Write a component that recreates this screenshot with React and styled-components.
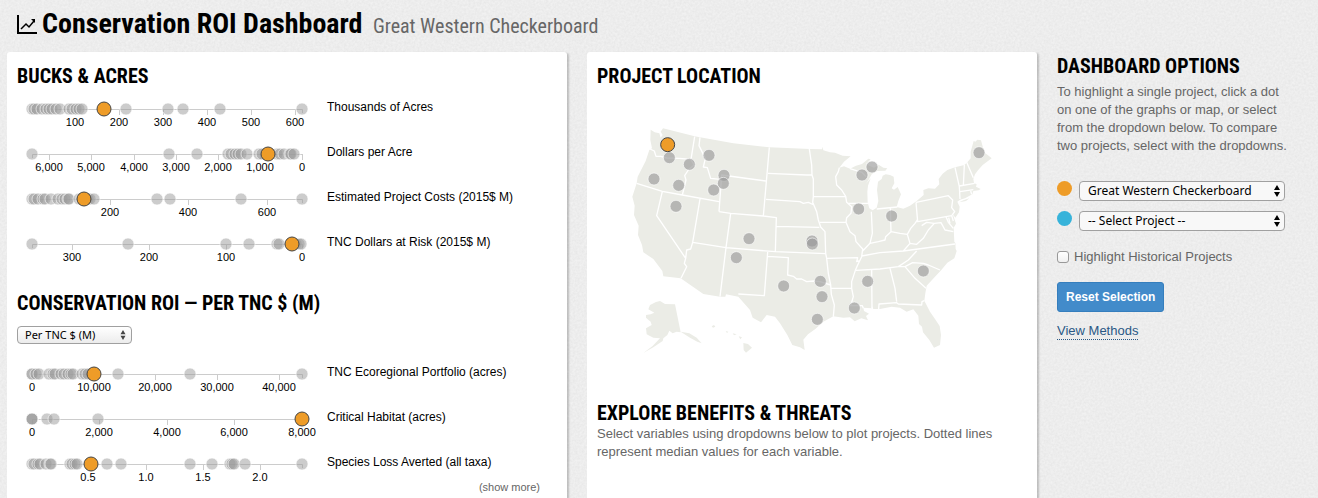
import React from "react";
import styled, { createGlobalStyle } from "styled-components";

const grain = `url("data:image/svg+xml,${encodeURIComponent(
  `<svg xmlns="http://www.w3.org/2000/svg" width="200" height="200"><filter id="g" color-interpolation-filters="sRGB"><feTurbulence type="fractalNoise" baseFrequency="0.45" numOctaves="2" stitchTiles="stitch"/><feColorMatrix values="0.06 0 0 0 0.898  0.06 0 0 0 0.898  0.06 0 0 0 0.898  0 0 0 0 1"/></filter><rect width="200" height="200" filter="url(#g)"/></svg>`
)}")`;

const GlobalStyle = createGlobalStyle`
  *, *::before, *::after { box-sizing: border-box; }
  body {
    margin: 0;
    color: #000;
    background: #ededed ${grain};
    font-family: "Liberation Sans", Arial, sans-serif;
  }
  h1, h2, p { margin: 0; }
`;

const narrow = `"Roboto Condensed", Roboto, sans-serif`;

const Page = styled.div`
  display: flex;
  flex-direction: column;
  min-height: 100vh;
  padding: 0 21px 0 7px;
`;

const Header = styled.header`
  display: flex;
  align-items: center;
  height: 52px;
  padding: 0 10px 2px;
`;

const HeaderIcon = styled.svg`
  flex: none;
  width: 20px;
  height: 20px;
  margin-right: 5px;
`;

const Title = styled.h1`
  font: 700 28px/36px ${narrow};
  white-space: nowrap;

  small {
    margin-left: 4px;
    color: #666;
    font-size: 20px;
    font-weight: 400;
  }
`;

const Columns = styled.main`
  display: grid;
  flex: 1;
  grid-template-columns: minmax(0, 56fr) minmax(0, 45fr) minmax(0, 24fr);
  gap: 20px;
`;

const Card = styled.section`
  padding: 12px 10px 0;
  background: #fff;
  border-radius: 3px 3px 0 0;
  box-shadow: 2px 1px 2px rgba(0, 0, 0, 0.2);
`;

const Sidebar = styled.aside`
  padding-top: 2px;
`;

const Heading = styled.h2`
  margin-top: ${(p) => p.$space || 0}px;
  font: 700 20px/24px ${narrow};
  text-transform: uppercase;
`;

const Copy = styled.p`
  color: #666;
  font-size: 13px;
  line-height: 18px;
`;

const SidebarCopy = styled(Copy)`
  margin-top: 5px;
  padding-right: 4px;
`;

const Charts = styled.div`
  margin-top: ${(p) => p.$space}px;
`;

const ChartRow = styled.div`
  display: flex;
  gap: 10px;
  height: 45px;
`;

const Strip = styled.svg`
  flex: none;
  width: 300px;
  height: 45px;
  overflow: visible;

  path { fill: none; stroke: #ccc; }
  text { font-size: 11px; text-anchor: middle; }
`;

const Dot = styled.circle`
  fill: #999;
  fill-opacity: ${(p) => p.$strength || 0.5};
  stroke: #fff;
  stroke-opacity: 0.6;
`;

const ActiveDot = styled.circle`
  fill: #ee9c28;
  stroke: #444;
`;

const ChartLabel = styled.span`
  padding-top: 3px;
  font-size: 12px;
  line-height: 18px;
`;

const ShowMore = styled.a`
  display: block;
  width: fit-content;
  margin: -16px 17px 0 auto;
  color: #666;
  font-size: 11px;
  line-height: 16px;
  text-decoration: none;
`;

const UsMap = styled.svg`
  display: block;
  width: 100%;
  margin-top: 27px;
`;

const SelectBox = styled.div`
  position: relative;
  width: ${(p) => (p.$compact ? "115px" : "206px")};
  margin-top: ${(p) => (p.$compact ? 11 : 0)}px;

  svg {
    position: absolute;
    top: 4px;
    right: ${(p) => (p.$compact ? 5 : 4)}px;
    width: 8px;
    height: ${(p) => (p.$compact ? 10 : 12)}px;
    fill: ${(p) => (p.$compact ? "#444" : "#000")};
    pointer-events: none;
  }
`;

const Select = styled.select`
  display: block;
  width: 100%;
  height: ${(p) => (p.$compact ? 18 : 20)}px;
  padding: 0 16px 0 ${(p) => (p.$compact ? 7 : 8)}px;
  border: 1px solid #a0a0a0;
  border-radius: 4px;
  background: ${(p) => (p.$compact ? "linear-gradient(#fff, #ececec)" : "#f8f8f8")};
  color: #000;
  font: ${(p) => (p.$compact ? 11 : 12)}px/16px "Noto Sans", "Open Sans", sans-serif;
  appearance: none;
`;

const Pickers = styled.div`
  display: grid;
  gap: 10px;
  margin-top: 26px;
`;

const Picker = styled.label`
  display: flex;
  gap: 7px;
  align-items: flex-start;
`;

const Swatch = styled.span`
  width: 15px;
  height: 15px;
  border-radius: 50%;
  background: ${(p) => p.$color};
`;

const CheckLabel = styled.label`
  display: flex;
  align-items: center;
  gap: 5px;
  margin-top: 17px;
  color: #666;
  font-size: 13px;
  line-height: 18px;
`;

const Checkbox = styled.input`
  width: 12px;
  height: 12px;
  margin: 0;
  border: 1px solid #999;
  border-radius: 3px;
  background: linear-gradient(#fff, #f0f0f0);
  appearance: none;

  &:checked { background: #428bca; }
`;

const ResetButton = styled.button`
  display: block;
  height: 30px;
  margin-top: 16px;
  padding: 0 8px;
  border: 1px solid #357ebd;
  border-radius: 3px;
  background: #428bca;
  color: #fff;
  font: 700 12px/18px "Liberation Sans", Arial, sans-serif;
  white-space: nowrap;
`;

const MethodsLink = styled.a`
  display: inline-block;
  margin-top: 10px;
  border-bottom: 1px dotted #2a5885;
  color: #2a5885;
  font-size: 13px;
  line-height: 17px;
  text-decoration: none;
`;

const bucks = [
  {
    label: "Thousands of Acres",
    ticks: [[58, "100"], [102, "200"], [146, "300"], [190, "400"], [234, "500"], [278, "600"]],
    dots: [15, 17, 20, 25, 29, 32, 35, 39, 43, 52, 55, 59, 62, 65, 109, 151, 166, 203, 285],
    active: 87,
  },
  {
    label: "Dollars per Acre",
    ticks: [[32, "6,000"], [74, "5,000"], [117, "4,000"], [159, "3,000"], [201, "2,000"], [243, "1,000"], [285, "0"]],
    dots: [15, 152, 180, 211, 214, 218, 221, 224, 230, 242, 245, 260, 263, 267, 273, 274, 277],
    active: 251,
  },
  {
    label: "Estimated Project Costs (2015$ M)",
    ticks: [[93, "200"], [171, "400"], [250, "600"]],
    dots: [15, 17, 21, 26, 28, 34, 41, 45, 48, 51, 52, 62, 65, 71, 73, 77, 140, 153, 224, 285],
    active: 67,
  },
  {
    label: "TNC Dollars at Risk (2015$ M)",
    ticks: [[55, "300"], [132, "200"], [209, "100"], [285, "0"]],
    dots: [15, 111, 209, 232, 260, 262, 277, 279, 282, 284],
    active: 275,
  },
];

const returns = [
  {
    label: "TNC Ecoregional Portfolio (acres)",
    ticks: [[15, "0"], [77, "10,000"], [138, "20,000"], [200, "30,000"], [262, "40,000"]],
    dots: [15, 15, 19, 22, 32, 36, 38, 44, 47, 51, 54, 56, 65, 68, 71, 101, 173, 285],
    active: 77,
  },
  {
    label: "Critical Habitat (acres)",
    ticks: [[15, "0"], [82, "2,000"], [150, "4,000"], [217, "6,000"], [285, "8,000"]],
    dots: [15, 15, 15, 30, 37, 81],
    active: 285,
  },
  {
    label: "Species Loss Averted (all taxa)",
    ticks: [[71, "0.5"], [129, "1.0"], [186, "1.5"], [243, "2.0"]],
    dots: [15, 17, 21, 23, 29, 33, 34, 53, 55, 58, 60, 90, 104, 173, 195, 213, 215, 217, 228, 285],
    active: 74,
  },
];

const usOutline =
  "M92 44L104 52L118 55L122 68L128 60L122 50L129 40L224 64L240 67L340 85L448 97L570 102L606 103L607 95L610 106L630 112L645 113L668 122L692 124L672 140L658 158L672 154L690 161L708 152L726 147L745 131L752 133L738 148L762 158L776 149L790 158L802 160L796 167L770 168L755 178L746 194L738 206L752 190L744 212L742 230L743 262L748 280L758 286L770 278L775 258L771 225L774 200L785 192L788 182L797 178L810 180L821 185L823 205L815 220L822 224L833 216L843 238L835 258L830 276L850 281L870 272L890 258L911 240L910 225L925 220L945 221L958 208L956 192L968 176L982 165L1005 157L1033 150L1042 142L1052 130L1052 110L1061 78L1066 80L1072 74L1083 76L1089 98L1095 114L1106 122L1115 130L1104 138L1097 143L1088 150L1074 166L1065 178L1060 192L1062 204L1070 208L1068 215L1082 222L1076 226L1060 228L1057 238L1035 250L1020 254L1012 260L1019 275L1017 292L1006 308L998 296L1008 326L1001 338L1003 380L1006 384L1007 402L1010 408L1003 430L982 443L964 465L945 485L920 512L916 535L913 557L930 590L945 612L959 633L963 660L960 690L942 698L928 675L909 652L906 635L897 627L895 602L880 583L860 590L840 578L815 575L780 582L760 582L756 573L755 580L730 578L732 588L747 596L738 603L744 616L724 610L704 619L690 607L670 608L640 604L610 620L586 642L564 658L550 674L554 705L540 697L517 690L502 660L480 625L465 605L440 600L423 622L398 608L390 585L355 545L318 538L316 545L300 545L250 537L182 490L130 484L127 468L100 432L70 412L66 390L54 360L56 332L42 300L44 272L37 245L50 205L53 185L77 138L88 105L96 100L91 75Z";

const smallLand = [
  "M85 583L90 570L108 561L120 558L135 567L165 568L182 652L170 650L158 655L148 647L142 660L130 670L128 678L100 697L70 714L98 693L120 670L100 668L80 658L78 640L95 630L92 620L78 608L78 600L92 598L103 593Z",
  "M182 650L208 655L230 668L245 685L232 680L210 668Z",
  "M1018 262L1030 256L1048 250L1038 258Z",
  "M275 634L282 630L286 635L279 638Z",
  "M317 648L325 650L321 654Z",
  "M338 655L350 658L342 661Z",
  "M356 664L366 667L361 673Z",
  "M370 684L384 687L396 698L378 713L371 705Z",
];

const stateLines = [
  "M90 102L103 108L108 124L122 124L140 129L178 130L213 133",
  "M224 65L213 133L222 150L205 165L194 182L198 195L187 240",
  "M50 205L127 229L187 240L297 260",
  "M240 67L237 92L256 130L250 156L262 158L272 190L301 193",
  "M297 290L305 180L437 198",
  "M448 97L430 303",
  "M444 175L560 180L577 180",
  "M438 253L540 260L550 265L565 262L582 270",
  "M568 102L575 150L576 180L580 192L580 245L677 244",
  "M297 290L332 295L430 303L469 308L466 410",
  "M469 334L598 337",
  "M580 245L578 262L590 290L595 315L602 336L615 350L617 415",
  "M240 252L218 382L318 398L466 410L617 416",
  "M332 295L318 398L300 545",
  "M127 229L110 302L197 430L200 405L212 402L218 382",
  "M197 430L193 445L200 455L183 490",
  "M443 411L433 542L355 537",
  "M443 424L505 428L503 480L520 484L530 492L545 492L560 500L580 498L600 500L632 510",
  "M617 415L620 430L625 475L632 510L634 538L643 570L640 605",
  "M620 430L713 428L710 440L720 437M632 520L695 520",
  "M658 158L655 170L647 185L650 210L665 225L677 244L680 262L695 275L693 295L680 308L678 322L690 350L705 362L708 380L728 402L725 425L713 450L706 466L695 500L695 520L700 545L692 572L727 572L730 580",
  "M600 322L678 322M683 265L745 265",
  "M754 290L757 355L750 385",
  "M770 282L832 276M811 280L813 350",
  "M728 408L750 385L775 380L795 375L797 365L813 350L840 355L862 358L872 340L885 325L892 315",
  "M888 262L893 320L995 302M888 262L985 242L998 255L995 278L1004 290L995 302L1000 318",
  "M725 423L780 413L850 408L1005 387",
  "M708 466L780 462L835 455L865 435L890 408",
  "M835 455L855 455L878 443L910 445L925 450L960 465",
  "M855 455L885 490L918 520",
  "M755 465L756 580M810 460L825 520L830 560",
  "M776 582L777 567L830 563L835 567L905 570L906 560L913 557",
  "M862 358L870 385L850 408M870 385L890 388L910 370L925 345L943 325L920 322L905 332M943 325L963 323L975 345L1000 350",
  "M1005 157L1018 215L1020 252M1033 150L1030 212M1040 142L1060 188",
  "M1018 213L1064 205M1020 230L1060 224M1052 228L1055 238",
  "M690 161L726 172L738 185",
  "M978 305L985 322L1000 340M986 308L990 325",
];

const mapDots = [
  [148, 128], [208, 148], [267, 121], [312, 181], [310, 205], [281, 225], [102, 192], [176, 211],
  [168, 274], [387, 371], [349, 428], [491, 513], [576, 378], [577, 387], [726, 180], [756, 156],
  [1077, 113], [716, 282], [815, 303], [910, 468], [743, 499], [601, 499], [606, 545], [592, 613], [703, 579],
];

function StripChart({ label, ticks, dots, active }) {
  return (
    <ChartRow>
      <Strip role="img" aria-label={label}>
        <path d={`M15.5 18V14.5H285.5V18${ticks.map(([x]) => `M${x + 0.5} 14V20`).join("")}`} />
        {ticks.map(([x, text]) => (
          <text key={text} x={x} y="31">{text}</text>
        ))}
        {dots.map((x, i) => (
          <Dot key={i} cx={x} cy="14" r="6" />
        ))}
        <ActiveDot cx={active} cy="14" r="7" />
      </Strip>
      <ChartLabel>{label}</ChartLabel>
    </ChartRow>
  );
}

function Dropdown({ compact, options, ...rest }) {
  return (
    <SelectBox $compact={compact}>
      <Select $compact={compact} {...rest}>
        {options.map((o) => (
          <option key={o}>{o}</option>
        ))}
      </Select>
      <svg viewBox="0 0 8 12" aria-hidden="true">
        <path d="M4 0L7 5H1ZM4 12L1 7H7Z" />
      </svg>
    </SelectBox>
  );
}

export default function App() {
  return (
    <>
      <GlobalStyle />
      <Page>
        <Header>
          <HeaderIcon viewBox="0 0 20 20" fill="none" stroke="#000" aria-hidden="true">
            <path d="M1 0V18H20" strokeWidth="2" />
            <path d="M4 14L9 9L12 12L17 6" strokeWidth="1.5" />
            <path d="M14 4H18V8Z" fill="#000" stroke="none" />
          </HeaderIcon>
          <Title>
            Conservation ROI Dashboard <small>Great Western Checkerboard</small>
          </Title>
        </Header>
        <Columns>
          <Card>
            <Heading>Bucks &amp; Acres</Heading>
            <Charts $space={7}>
              {bucks.map((c) => <StripChart key={c.label} {...c} />)}
            </Charts>
            <Heading $space={16}>Conservation ROI — Per TNC $ (M)</Heading>
            <Dropdown compact aria-label="Return basis" options={["Per TNC $ (M)"]} />
            <Charts $space={16}>
              {returns.map((c) => <StripChart key={c.label} {...c} />)}
            </Charts>
            <ShowMore href="#more">(show more)</ShowMore>
          </Card>
          <Card>
            <Heading>Project Location</Heading>
            <UsMap viewBox="-69 0 1290 720" role="img" aria-label="Project locations in the United States">
              <g fill="#ebece6">
                <path d={usOutline} />
                {smallLand.map((d) => <path key={d} d={d} />)}
              </g>
              <path d={stateLines.join("")} fill="none" stroke="#fff" strokeWidth="4" strokeLinejoin="round" />
              {mapDots.map(([x, y]) => (
                <Dot key={`${x}-${y}`} cx={x} cy={y} r="18" strokeWidth="3" $strength={0.65} />
              ))}
              <ActiveDot cx="143" cy="89" r="21" strokeWidth="3" />
            </UsMap>
            <Heading $space={46}>Explore Benefits &amp; Threats</Heading>
            <Copy>
              Select variables using dropdowns below to plot projects. Dotted lines represent median
              values for each variable.
            </Copy>
          </Card>
          <Sidebar>
            <Heading>Dashboard Options</Heading>
            <SidebarCopy>
              To highlight a single project, click a dot on one of the graphs or map, or select from
              the dropdown below. To compare two projects, select with the dropdowns.
            </SidebarCopy>
            <Pickers>
              <Picker>
                <Swatch $color="#ee9c28" />
                <Dropdown aria-label="First project" options={["Great Western Checkerboard"]} />
              </Picker>
              <Picker>
                <Swatch $color="#37b3da" />
                <Dropdown aria-label="Second project" options={["-- Select Project --"]} />
              </Picker>
            </Pickers>
            <CheckLabel>
              <Checkbox type="checkbox" />
              Highlight Historical Projects
            </CheckLabel>
            <ResetButton type="button">Reset Selection</ResetButton>
            <MethodsLink href="#methods">View Methods</MethodsLink>
          </Sidebar>
        </Columns>
      </Page>
    </>
  );
}
